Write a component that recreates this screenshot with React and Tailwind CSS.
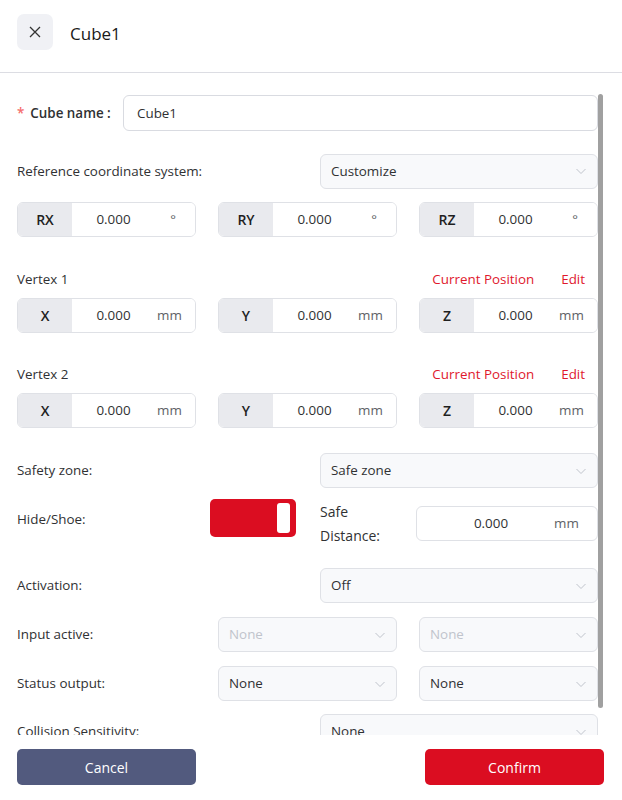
import React from "react";

const Chevron = ({ className = "" }) => (
  <svg width="12" height="12" viewBox="0 0 12 12" fill="none" className={className}>
    <path d="M1.5 4l4.5 4.5L10.5 4" stroke="currentColor" strokeWidth="1" />
  </svg>
);

const Select = ({ value, disabled, className = "" }) => (
  <div
    className={`flex h-[35px] items-center justify-between rounded-[6px] border border-[#dfe1e6] bg-[#f8f9fb] pl-[10px] pr-[10px] ${className}`}
  >
    <span className={disabled ? "text-[#c0c4cc]" : "text-[#303133]"}>{value}</span>
    <Chevron className="text-[#c0c4cc]" />
  </div>
);

const Field = ({ label, unit }) => (
  <div className="flex h-[35px] w-[179px] overflow-hidden rounded-[6px] border border-[#dfe1e6]">
    <div className="flex w-[54px] items-center justify-center bg-[#e9eaee] text-[14px] font-semibold text-[#1f1f1f]">
      {label}
    </div>
    <div className="flex flex-1 items-center bg-white">
      <span className="flex-1 text-center text-[#303133]">0.000</span>
      <span className={`w-[40px] text-[#606266] ${unit === "°" ? "pr-[4px] text-center" : "pl-[2px]"}`}>{unit}</span>
    </div>
  </div>
);

const Row3 = ({ labels, unit }) => (
  <div className="flex gap-[22px]">
    {labels.map((l) => (
      <Field key={l} label={l} unit={unit} />
    ))}
  </div>
);

const VertexHeader = ({ title }) => (
  <div className="flex h-[20px] items-center pb-[2px]">
    <span className="flex-1 text-[#303133]">{title}</span>
    <span className="mr-[27px] text-[#e0182d]">Current Position</span>
    <span className="mr-[13px] text-[#e0182d]">Edit</span>
  </div>
);

const App = () => {
  return (
    <div
      className="flex h-[800px] w-[622px] flex-col bg-white text-[13.4px] text-[#303133]"
      style={{ fontFamily: "'Open Sans', 'Noto Sans', sans-serif" }}
    >
      <div className="flex h-[73px] items-start border-b border-[#dcdde3] pl-[17px] pt-[14px]">
        <button className="flex h-[36px] w-[36px] items-center justify-center rounded-[7px] bg-[#f0f1f5] text-[#333]" type="button">
          <svg width="12" height="12" viewBox="0 0 12 12">
            <path d="M1 1l10 10M11 1L1 11" stroke="currentColor" strokeWidth="1.3" />
          </svg>
        </button>
        <h1 className="ml-[17px] mt-[2px] text-[17px] font-medium leading-[36px] text-[#1a1a1a]">Cube1</h1>
      </div>

      <div className="relative flex-1 overflow-hidden">
        <div className="absolute right-[19px] top-[21px] h-[614px] w-[5px] rounded-full bg-[#a0a0a0]" />
        <div className="w-[598px] pl-[17px] pt-[22px]">
          <div className="flex h-[36px] items-center">
            <span className="w-[106px] font-semibold text-[#303133]">
              <span className="mr-[6px] text-[#f56c6c]">*</span>Cube name :
            </span>
            <div className="flex h-[36px] flex-1 items-center rounded-[6px] border border-[#d9dbe1] bg-white pl-[13px]">Cube1</div>
          </div>

          <div className="mt-[22px] flex h-[36px] items-center">
            <span className="w-[303px]">Reference coordinate system:</span>
            <Select value="Customize" className="flex-1" />
          </div>

          <div className="mt-[13px]">
            <Row3 labels={["RX", "RY", "RZ"]} unit="°" />
          </div>

          <div className="mt-[33px]">
            <VertexHeader title="Vertex 1" />
          </div>
          <div className="mt-[8px]">
            <Row3 labels={["X", "Y", "Z"]} unit="mm" />
          </div>

          <div className="mt-[32px]">
            <VertexHeader title="Vertex 2" />
          </div>
          <div className="mt-[8px]">
            <Row3 labels={["X", "Y", "Z"]} unit="mm" />
          </div>

          <div className="mt-[25px] flex items-center">
            <span className="w-[303px]">Safety zone:</span>
            <Select value="Safe zone" className="flex-1" />
          </div>

          <div className="mt-[11px] flex h-[42px] items-start">
            <span className="mt-[10px] w-[193px]">Hide/Shoe:</span>
            <div className="flex h-[38px] w-[86px] items-center justify-end rounded-[5px] bg-[#db0d21] pr-[6px]">
              <div className="h-[30px] w-[13px] rounded-[3px] bg-white" />
            </div>
            <span className="ml-[24px] mt-[1px] w-[96px] text-[14px] leading-[24px]">
              Safe
              <br />
              Distance:
            </span>
            <div className="mt-[7px] flex h-[35px] flex-1 items-center rounded-[6px] border border-[#dfe1e6] bg-white">
              <span className="flex-1 pl-[18px] text-center">0.000</span>
              <span className="w-[50px] pl-[7px] text-[#606266]">mm</span>
            </div>
          </div>

          <div className="mt-[27px] flex items-center">
            <span className="w-[303px]">Activation:</span>
            <Select value="Off" className="flex-1" />
          </div>

          <div className="mt-[14px] flex items-center">
            <span className="w-[201px]">Input active:</span>
            <Select value="None" disabled className="w-[179px]" />
            <Select value="None" disabled className="ml-[22px] w-[179px]" />
          </div>

          <div className="mt-[14px] flex items-center">
            <span className="w-[201px]">Status output:</span>
            <Select value="None" className="w-[179px]" />
            <Select value="None" className="ml-[22px] w-[179px]" />
          </div>

          <div className="mt-[13px] flex items-center">
            <span className="w-[303px]">Collision Sensitivity:</span>
            <Select value="None" className="flex-1" />
          </div>
        </div>
      </div>

      <div className="flex h-[65px] items-start justify-between pl-[17px] pr-[18px] pt-[14px]">
        <button type="button" className="h-[36px] w-[179px] rounded-[5px] bg-[#525a7e] text-[14px] text-white">
          Cancel
        </button>
        <button type="button" className="h-[36px] w-[179px] rounded-[5px] bg-[#db0d21] text-[14px] text-white">
          Confirm
        </button>
      </div>
    </div>
  );
};

export default App;
